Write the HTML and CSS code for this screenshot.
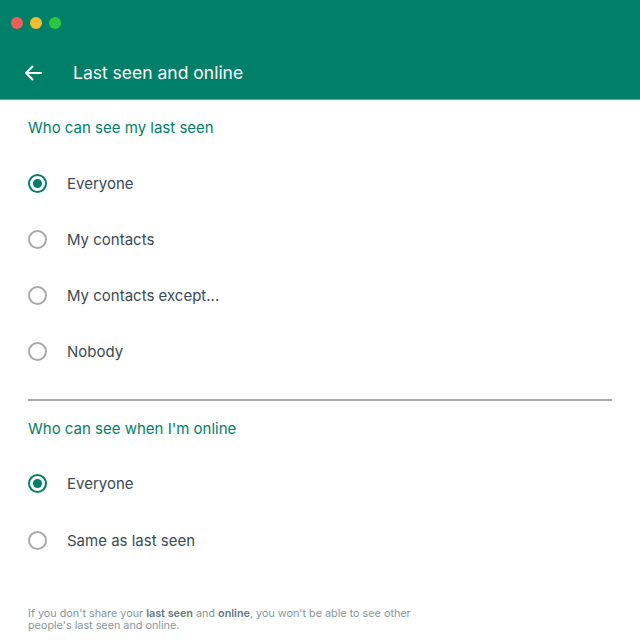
FILE: index.html
```html
<!DOCTYPE html>
<html lang="en">

<head>
    <meta charset="UTF-8">
    <meta name="viewport" content="width=device-width, initial-scale=1.0">
    <title>Last seen and online</title>
    <link rel="stylesheet" href="styles.css">
</head>

<body>
    <header class="header">
        <div class="traffic">
            <span class="dot red"></span>
            <span class="dot yellow"></span>
            <span class="dot green"></span>
        </div>
        <div class="titlebar">
            <svg class="back" width="18" height="16" viewBox="0 0 18 16">
                <path d="M 17 8 H 2 M 8.5 1.5 L 2 8 L 8.5 14.5"></path>
            </svg>
            <h1 class="title">Last seen and online</h1>
        </div>
    </header>

    <main class="content">
        <section class="group">
            <h2 class="group-title">Who can see my last seen</h2>
            <ul class="options">
                <li class="option checked"><span class="radio"></span>Everyone</li>
                <li class="option"><span class="radio"></span>My contacts</li>
                <li class="option"><span class="radio"></span>My contacts except...</li>
                <li class="option"><span class="radio"></span>Nobody</li>
            </ul>
        </section>

        <hr class="divider">

        <section class="group">
            <h2 class="group-title">Who can see when I'm online</h2>
            <ul class="options">
                <li class="option checked"><span class="radio"></span>Everyone</li>
                <li class="option"><span class="radio"></span>Same as last seen</li>
            </ul>
        </section>

        <p class="note">If you don't share your <b>last seen</b> and <b>online</b>, you won't be able to see other<br>people's last seen and online.</p>
    </main>
</body>

</html>
```

FILE: styles.css
```css
* {
    box-sizing: border-box;
}

body {
    margin: 0;
    background: #fff;
    font-family: Inter, "Noto Sans", sans-serif;
}

.header {
    height: 100px;
    background: #008069;
    border-bottom: 1px solid #4fb8a4;
}

.traffic {
    display: flex;
    gap: 7px;
    padding: 17px 0 0 11px;
}

.dot {
    width: 12px;
    height: 12px;
    border-radius: 50%;
}

.red {
    background: #ed5f58;
}

.yellow {
    background: #f4bd2f;
}

.green {
    background: #2ac840;
}

.titlebar {
    display: flex;
    align-items: center;
    padding: 33px 0 0 24px;
}

.back {
    fill: none;
    stroke: #fff;
    stroke-width: 2;
    stroke-linecap: round;
    stroke-linejoin: round;
}

.title {
    margin: 0 0 0 31px;
    font-size: 17.5px;
    font-weight: 400;
    color: #fff;
}

.content {
    padding: 0 28px;
}

.group-title {
    margin: 0;
    height: 56px;
    display: flex;
    align-items: center;
    font-size: 15px;
    font-weight: 400;
    color: #008069;
}

.group:first-child .group-title {
    height: 55px;
}

.options {
    list-style: none;
    margin: 0;
    padding: 0;
}

.option {
    height: 56px;
    display: flex;
    align-items: center;
    font-size: 15px;
    color: #3b4a54;
}

.radio {
    width: 19px;
    height: 19px;
    margin-right: 20px;
    border: 2px solid #aaa;
    border-radius: 50%;
    display: flex;
    align-items: center;
    justify-content: center;
}

.checked .radio {
    border-color: #008069;
}

.checked .radio::after {
    content: "";
    width: 9px;
    height: 9px;
    border-radius: 50%;
    background: #008069;
}

.divider {
    margin: 20px 0 0;
    border: 0;
    border-top: 2px solid #aaa;
}

.divider + .group .group-title {
    height: 54px;
}

.divider + .group .option:first-child {
    height: 57px;
}

.note {
    margin: 40px 0 0;
    font-size: 10.8px;
    line-height: 12px;
    color: #8696a0;
}

.note b {
    font-weight: 600;
    color: #667781;
}
```
